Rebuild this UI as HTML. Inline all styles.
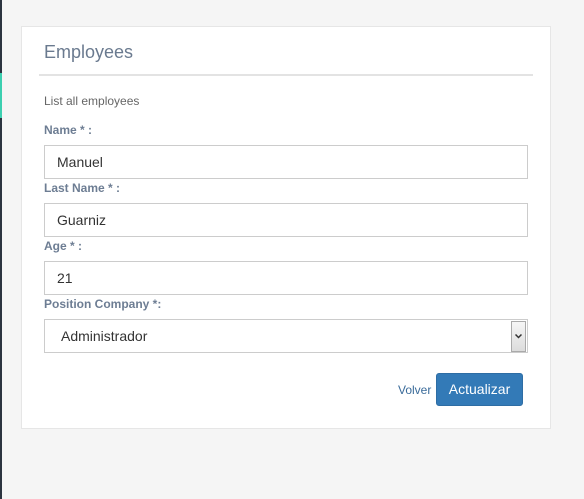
<!DOCTYPE html>
<html><head><style>
body{margin:0;width:584px;height:499px;background:#f5f5f5;font-family:"Liberation Sans",sans-serif;position:relative;overflow:hidden}
.l{position:absolute;left:0;top:0;width:2px;height:499px;background:#2c3440}
.t{position:absolute;left:0;top:73px;width:2px;height:45px;background:#3ccfb0}
.card{position:absolute;left:21px;top:26px;width:528px;height:401px;background:#fff;border:1px solid #e6e6e6}
.h{position:absolute;left:44px;top:42px;font-size:18px;color:#6a7a8f}
.hr{position:absolute;left:39px;top:74px;width:494px;height:2px;background:#e3e3e3}
.s{position:absolute;left:44px;top:94px;font-size:12px;color:#666}
.lb{position:absolute;left:44px;font-size:12px;font-weight:bold;color:#6d7d93}
.in{position:absolute;left:44px;width:482px;height:32px;border:1px solid #ccc;font-size:14px;color:#333;line-height:32px;box-sizing:content-box;text-indent:12px}
.sel{text-indent:16px}
.arr{position:absolute;right:1px;top:1px;width:15px;height:31px;background:linear-gradient(#f6f6f6,#dcdcdc);border:1px solid #aaa;box-sizing:border-box}
.arr svg{position:absolute;left:3px;top:12px}
.v{position:absolute;left:398px;top:383px;font-size:12px;color:#3a6b9a}
.b{position:absolute;left:436px;top:373px;width:87px;height:33px;background:#337ab7;border:1px solid #2e6da4;border-radius:3px;box-sizing:border-box;color:#fff;font-size:14px;text-align:center;line-height:31px}
</style></head><body>
<div class="l"></div><div class="t"></div>
<div class="card"></div>
<div class="h">Employees</div>
<div class="hr"></div>
<div class="s">List all employees</div>
<div class="lb" style="top:123px">Name * :</div>
<div class="in" style="top:145px">Manuel</div>
<div class="lb" style="top:181px">Last Name * :</div>
<div class="in" style="top:203px">Guarniz</div>
<div class="lb" style="top:239px">Age * :</div>
<div class="in" style="top:261px">21</div>
<div class="lb" style="top:297px">Position Company *:</div>
<div class="in sel" style="top:319px">Administrador<div class="arr"><svg width="7" height="5" viewBox="0 0 7 5"><path d="M0.5 0.5L3.5 3.5L6.5 0.5" stroke="#333" stroke-width="1.5" fill="none"/></svg></div></div>
<div class="v">Volver</div>
<div class="b">Actualizar</div>
</body></html>
